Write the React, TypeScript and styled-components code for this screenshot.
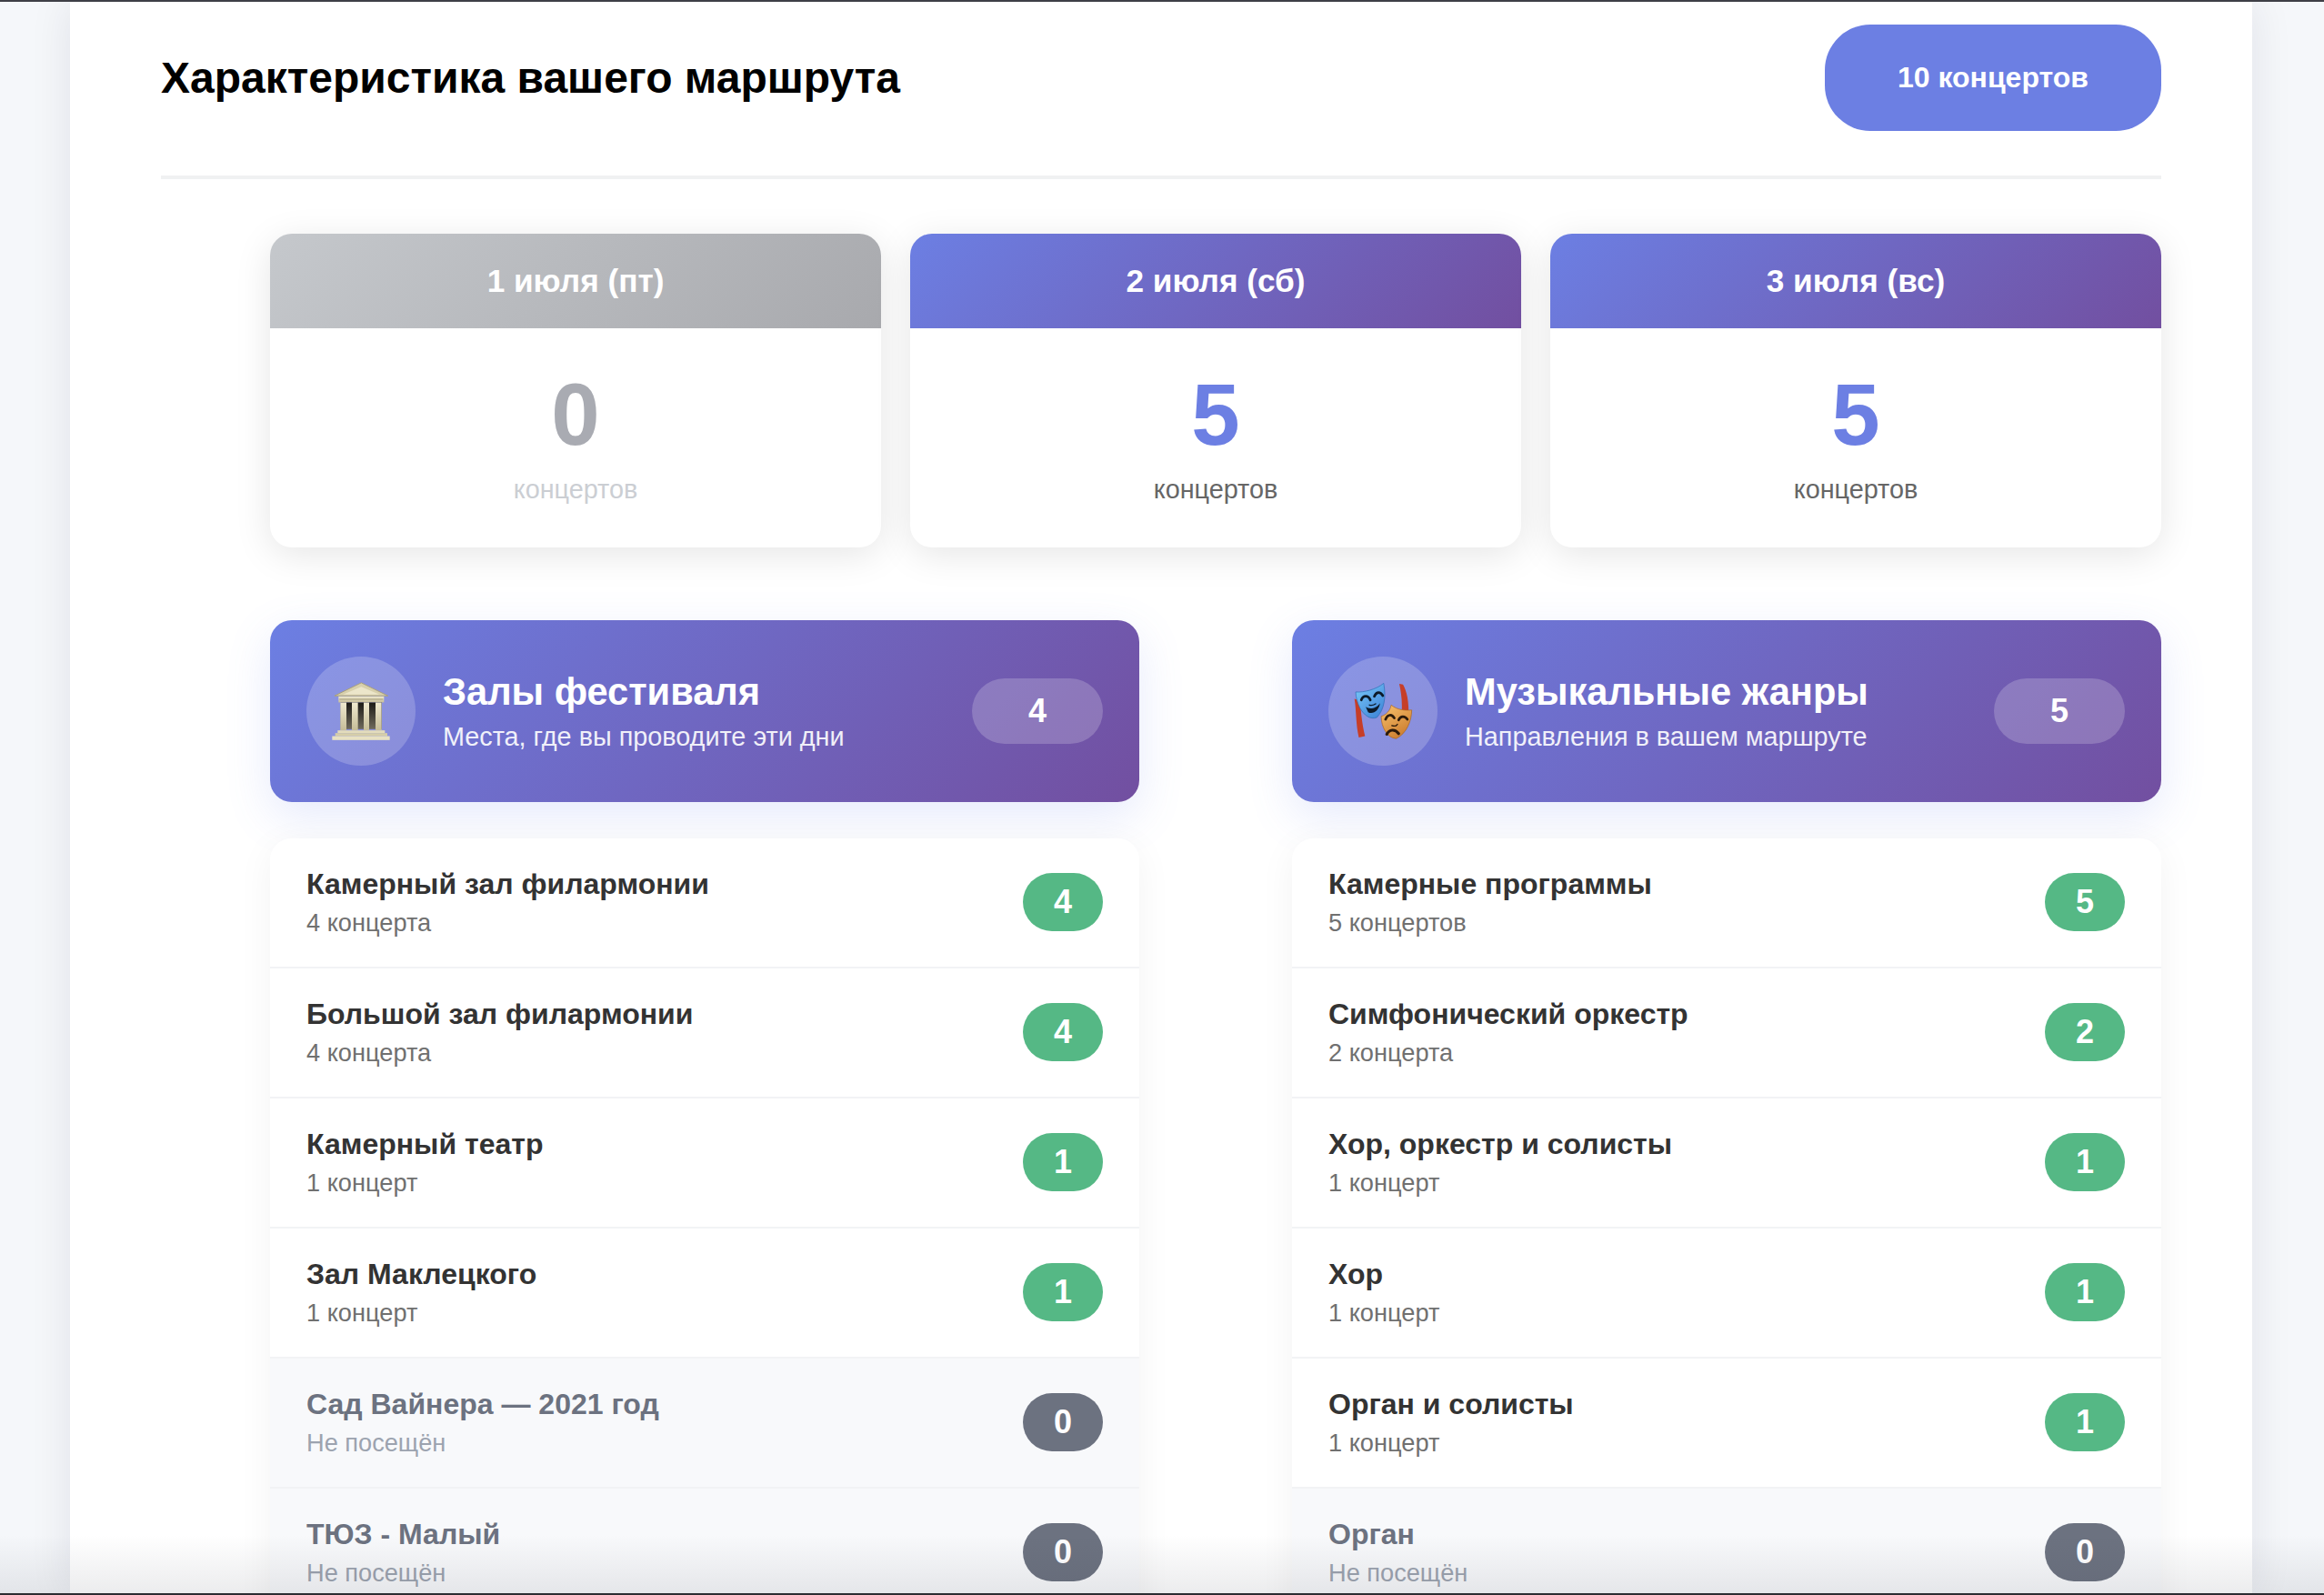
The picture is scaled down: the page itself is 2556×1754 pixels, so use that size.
import React from "react";
import styled, { createGlobalStyle } from "styled-components";

const GlobalStyle = createGlobalStyle`
  html, body {
    margin: 0;
    padding: 0;
    overflow: hidden;
    background: #f5f7fa;
  }
  * {
    box-sizing: border-box;
  }
`;

const Page = styled.div`
  position: relative;
  height: 1754px;
  overflow: hidden;
  padding-left: 77px;
  display: flex;
  background: #f5f7fa;
  border-top: 2px solid #3e3f46;
  border-bottom: 2px solid #2b2c31;
  font-family: "Liberation Sans", Arial, sans-serif;
`;

const BottomFade = styled.div`
  position: absolute;
  left: 0;
  right: 0;
  bottom: 0;
  height: 64px;
  background: linear-gradient(to bottom, rgba(40, 44, 60, 0), rgba(40, 44, 60, 0.09));
  pointer-events: none;
`;

const Sheet = styled.main`
  width: 2400px;
  flex-shrink: 0;
  padding: 0 100px;
  background: #fff;
  box-shadow: 0 0 44px rgba(20, 24, 50, 0.09);
`;

const TopBar = styled.header`
  height: 195px;
  display: flex;
  align-items: flex-start;
  justify-content: space-between;
  padding-top: 25px;
  border-bottom: 4px solid #f0f1f2;
`;

const PageTitle = styled.h2`
  margin: 0;
  height: 116px;
  display: flex;
  align-items: center;
  font-size: 48px;
  font-weight: 700;
  color: #000;
`;

const TotalBadge = styled.div`
  width: 370px;
  height: 117px;
  display: flex;
  align-items: center;
  justify-content: center;
  border-radius: 50px;
  background: #6c7fe3;
  color: #fff;
  font-size: 32px;
  font-weight: 700;
`;

const Content = styled.div`
  padding: 60px 0 0 120px;
`;

const DayGrid = styled.section`
  display: grid;
  grid-template-columns: repeat(3, 672px);
  gap: 32px;
`;

const DayCard = styled.article`
  height: 345px;
  border-radius: 24px;
  overflow: hidden;
  background: #fff;
  box-shadow: 0 8px 40px rgba(0, 0, 0, 0.1);
`;

const DayHead = styled.div<{ $empty: boolean }>`
  height: 104px;
  display: flex;
  align-items: center;
  justify-content: center;
  color: #fff;
  font-size: 35.2px;
  font-weight: 700;
  background: ${(p) =>
    p.$empty
      ? "linear-gradient(135deg, #c5c8cc, #a8a9ad)"
      : "linear-gradient(135deg, #6c7fe3, #724fa0)"};
`;

const DayBody = styled.div`
  display: flex;
  flex-direction: column;
  align-items: center;
  padding-top: 40px;
`;

const DayCount = styled.div<{ $empty: boolean }>`
  font-size: 96px;
  line-height: 110px;
  font-weight: 700;
  color: ${(p) => (p.$empty ? "#a9abb2" : "#6c7fe3")};
`;

const DayLabel = styled.div<{ $empty: boolean }>`
  margin-top: 10px;
  font-size: 28.8px;
  line-height: 34px;
  color: ${(p) => (p.$empty ? "#cbced3" : "#666")};
`;

const Columns = styled.div`
  margin-top: 80px;
  display: grid;
  grid-template-columns: repeat(2, 956px);
  gap: 168px;
`;

const SectionHead = styled.div`
  height: 200px;
  padding: 0 40px;
  display: flex;
  align-items: center;
  gap: 30px;
  border-radius: 24px;
  color: #fff;
  background: linear-gradient(135deg, #6c7fe3, #724fa0);
  box-shadow: 0 16px 50px rgba(102, 126, 234, 0.16);
`;

const IconCircle = styled.div`
  width: 120px;
  height: 120px;
  flex-shrink: 0;
  display: flex;
  align-items: center;
  justify-content: center;
  border-radius: 50%;
  background: rgba(255, 255, 255, 0.2);
`;

const HeadText = styled.div`
  flex: 1;
  min-width: 0;
  padding-top: 1px;
`;

const HeadTitle = styled.h3`
  margin: 0;
  font-size: 41.6px;
  line-height: 46px;
  font-weight: 700;
`;

const HeadSub = styled.p`
  margin: 8px 0 0;
  font-size: 28.8px;
  line-height: 36px;
  opacity: 0.9;
`;

const HeadCount = styled.div`
  width: 144px;
  height: 72px;
  display: flex;
  align-items: center;
  justify-content: center;
  border-radius: 36px;
  background: rgba(255, 255, 255, 0.2);
  font-size: 36px;
  font-weight: 700;
`;

const List = styled.ul`
  list-style: none;
  margin: 40px 0 0;
  padding: 0;
  border-radius: 24px 24px 0 0;
  overflow: hidden;
  box-shadow: 0 8px 40px rgba(0, 0, 0, 0.05);
`;

const Row = styled.li<{ $empty: boolean }>`
  height: 143px;
  padding: 0 40px 1px;
  display: flex;
  align-items: center;
  justify-content: space-between;
  background: ${(p) => (p.$empty ? "#f8f9fb" : "#fff")};
  border-bottom: 2px solid #f2f3f5;
`;

const RowText = styled.div`
  padding-top: 1px;
`;

const RowName = styled.div<{ $empty: boolean }>`
  font-size: 32px;
  line-height: 38px;
  font-weight: 700;
  color: ${(p) => (p.$empty ? "#6c7280" : "#333")};
`;

const RowNote = styled.div<{ $empty: boolean }>`
  margin-top: 7px;
  font-size: 27.2px;
  line-height: 34px;
  color: ${(p) => (p.$empty ? "#9ca3af" : "#707070")};
`;

const CountBadge = styled.div<{ $empty: boolean }>`
  width: 88px;
  height: 64px;
  display: flex;
  align-items: center;
  justify-content: center;
  border-radius: 32px;
  color: #fff;
  font-size: 36px;
  font-weight: 700;
  background: ${(p) => (p.$empty ? "#6c7280" : "#55b885")};
`;

const TempleIcon = () => (
  <svg width="65" height="67" viewBox="75 80 195 200" aria-hidden="true">
    <defs>
      <linearGradient id="stone" x1="0" y1="0" x2="0" y2="1">
        <stop offset="0" stopColor="#efe9cf" />
        <stop offset="1" stopColor="#c6bd98" />
      </linearGradient>
      <linearGradient id="gap" x1="0" y1="0" x2="0" y2="1">
        <stop offset="0" stopColor="#1c1a16" />
        <stop offset="1" stopColor="#6f6a5c" />
      </linearGradient>
    </defs>
    <path d="M172 85 L260 128 L84 128 Z" fill="#d8d0ac" stroke="#a89f7c" strokeWidth="3" />
    <path d="M172 98 L232 124 L112 124 Z" fill="#ece6ca" />
    <rect x="97" y="130" width="150" height="20" fill="url(#stone)" />
    <rect x="100" y="138" width="144" height="3" fill="#a69d7a" />
    <rect x="104" y="150" width="136" height="88" fill="url(#gap)" />
    <rect x="103" y="150" width="20" height="92" fill="url(#stone)" />
    <rect x="141" y="150" width="20" height="92" fill="url(#stone)" />
    <rect x="180" y="150" width="18" height="92" fill="url(#stone)" />
    <rect x="219" y="150" width="20" height="92" fill="url(#stone)" />
    <rect x="94" y="242" width="156" height="9" fill="#e3dcbc" />
    <rect x="86" y="251" width="172" height="10" fill="#d5cda8" />
    <rect x="76" y="261" width="190" height="13" fill="#e8e1c2" />
  </svg>
);

const MasksIcon = () => (
  <svg width="65" height="65" viewBox="118 116 190 190" aria-hidden="true">
    <defs>
      <linearGradient id="blueMask" x1="0" y1="0" x2="0.8" y2="1">
        <stop offset="0" stopColor="#7ccbfa" />
        <stop offset="1" stopColor="#3f86d8" />
      </linearGradient>
      <linearGradient id="orangeMask" x1="0.2" y1="0" x2="0.8" y2="1">
        <stop offset="0" stopColor="#f6bd68" />
        <stop offset="1" stopColor="#c9782a" />
      </linearGradient>
    </defs>
    <path d="M120 170 C126 205 124 250 134 294 L154 290 C144 250 140 205 138 176 Z" fill="#c63e28" />
    <path d="M264 122 L276 124 C288 145 294 175 294 210 L272 210 C274 178 270 148 264 122 Z" fill="#c63e28" />
    <path
      d="M124 148 C150 150 190 140 214 120 C222 165 216 205 192 230 C170 238 150 222 138 200 C130 184 124 165 124 148 Z"
      fill="url(#blueMask)"
      stroke="#2f6db5"
      strokeWidth="2"
    />
    <path
      d="M206 226 C222 222 235 208 238 190 C258 206 282 208 304 206 C304 240 288 282 254 298 C226 296 206 262 206 226 Z"
      fill="url(#orangeMask)"
      stroke="#a96420"
      strokeWidth="2"
    />
    <g fill="none" stroke="#0c1a28" strokeWidth="8" strokeLinecap="round">
      <path d="M142 174 C148 158 164 158 171 174" />
      <path d="M184 162 C190 146 204 146 211 160" />
      <path d="M168 190 C174 192 182 190 188 186" strokeWidth="4" />
      <path d="M220 236 C226 220 240 218 248 232" stroke="#2c1a0a" />
      <path d="M262 238 C268 224 282 224 290 236" stroke="#2c1a0a" />
      <path d="M240 256 C246 258 254 258 258 252" stroke="#2c1a0a" strokeWidth="4" />
      <path d="M224 284 C232 268 250 266 262 282" stroke="#2c1a0a" strokeWidth="9" />
    </g>
    <path d="M156 196 C170 206 192 200 202 184 C200 206 180 222 164 213 Z" fill="#0c1a28" />
  </svg>
);

type Item = { name: string; note: string; count: number };

const days = [
  { title: "1 июля (пт)", count: 0 },
  { title: "2 июля (сб)", count: 5 },
  { title: "3 июля (вс)", count: 5 },
];

const halls: Item[] = [
  { name: "Камерный зал филармонии", note: "4 концерта", count: 4 },
  { name: "Большой зал филармонии", note: "4 концерта", count: 4 },
  { name: "Камерный театр", note: "1 концерт", count: 1 },
  { name: "Зал Маклецкого", note: "1 концерт", count: 1 },
  { name: "Сад Вайнера — 2021 год", note: "Не посещён", count: 0 },
  { name: "ТЮЗ - Малый", note: "Не посещён", count: 0 },
];

const genres: Item[] = [
  { name: "Камерные программы", note: "5 концертов", count: 5 },
  { name: "Симфонический оркестр", note: "2 концерта", count: 2 },
  { name: "Хор, оркестр и солисты", note: "1 концерт", count: 1 },
  { name: "Хор", note: "1 концерт", count: 1 },
  { name: "Орган и солисты", note: "1 концерт", count: 1 },
  { name: "Орган", note: "Не посещён", count: 0 },
];

const Section = ({
  icon,
  title,
  sub,
  total,
  items,
}: {
  icon: React.ReactNode;
  title: string;
  sub: string;
  total: number;
  items: Item[];
}) => (
  <section>
    <SectionHead>
      <IconCircle>{icon}</IconCircle>
      <HeadText>
        <HeadTitle>{title}</HeadTitle>
        <HeadSub>{sub}</HeadSub>
      </HeadText>
      <HeadCount>{total}</HeadCount>
    </SectionHead>
    <List>
      {items.map((item) => (
        <Row key={item.name} $empty={item.count === 0}>
          <RowText>
            <RowName $empty={item.count === 0}>{item.name}</RowName>
            <RowNote $empty={item.count === 0}>{item.note}</RowNote>
          </RowText>
          <CountBadge $empty={item.count === 0}>{item.count}</CountBadge>
        </Row>
      ))}
    </List>
  </section>
);

const App = () => {
  return (
    <>
      <GlobalStyle />
      <Page>
        <Sheet>
          <TopBar>
            <PageTitle>Характеристика вашего маршрута</PageTitle>
            <TotalBadge>10 концертов</TotalBadge>
          </TopBar>
          <Content>
            <DayGrid>
              {days.map((day) => (
                <DayCard key={day.title}>
                  <DayHead $empty={day.count === 0}>{day.title}</DayHead>
                  <DayBody>
                    <DayCount $empty={day.count === 0}>{day.count}</DayCount>
                    <DayLabel $empty={day.count === 0}>концертов</DayLabel>
                  </DayBody>
                </DayCard>
              ))}
            </DayGrid>
            <Columns>
              <Section
                icon={<TempleIcon />}
                title="Залы фестиваля"
                sub="Места, где вы проводите эти дни"
                total={4}
                items={halls}
              />
              <Section
                icon={<MasksIcon />}
                title="Музыкальные жанры"
                sub="Направления в вашем маршруте"
                total={5}
                items={genres}
              />
            </Columns>
          </Content>
        </Sheet>
        <BottomFade />
      </Page>
    </>
  );
};

export default App;
